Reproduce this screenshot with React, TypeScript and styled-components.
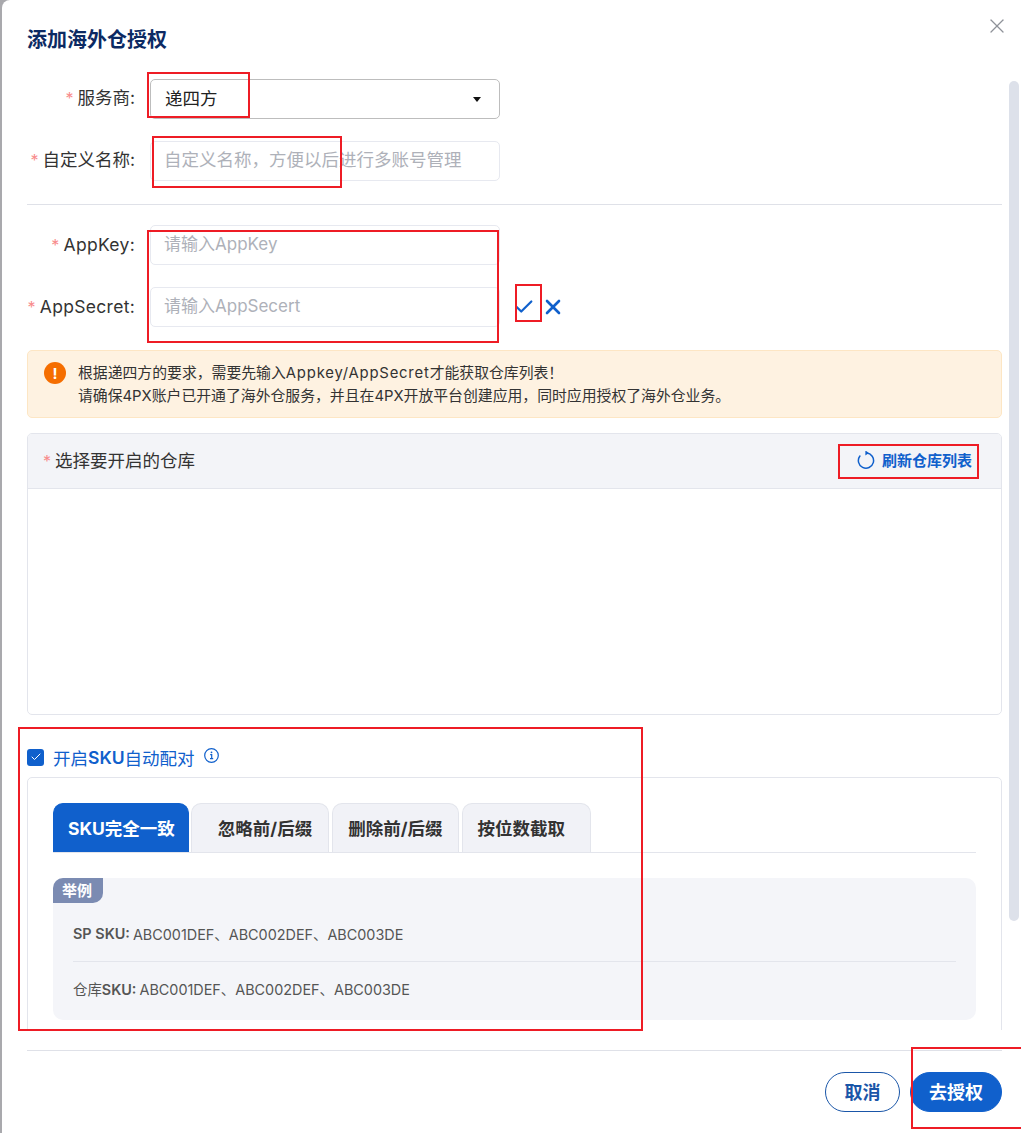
import { Check, X } from "lucide-react";
import styled, { createGlobalStyle } from "styled-components";

const GlobalStyle = createGlobalStyle`
  html, body {
    margin: 0;
    padding: 0;
    background: #a9a9ad;
  }

  body {
    font-family: Inter, "Noto Sans CJK SC", sans-serif;
    color: #333;
  }

  * {
    box-sizing: border-box;
  }
`;

const Page = styled.div`
  position: relative;
  width: 1021px;
  height: 1133px;
  padding-left: 2px;
  overflow: hidden;
`;

const Modal = styled.div`
  height: 1133px;
  padding: 25px 19px 0 25px;
  background: #fff;
  border-radius: 8px 0 0 0;
  display: flex;
  flex-direction: column;
`;

const Title = styled.h2`
  margin: 0 0 24px;
  font-size: 20px;
  line-height: 30px;
  font-weight: 700;
  color: #0c2a63;
`;

const CloseButton = styled.div`
  position: absolute;
  top: 14px;
  left: 985px;
  width: 24px;
  height: 24px;
  color: #8f9299;
  display: flex;
`;

const Scrollbar = styled.div`
  position: absolute;
  top: 81px;
  left: 1009px;
  width: 10px;
  height: 840px;
  border-radius: 5px;
  background: #dde1ea;
`;

const Body = styled.div`
  height: 951px;
  overflow: hidden;
  flex: none;
`;

const FormRow = styled.div<{ $mb: number }>`
  display: flex;
  align-items: center;
  height: 40px;
  margin-bottom: ${(p) => p.$mb}px;
`;

const Label = styled.label<{ $latin?: boolean }>`
  width: 108px;
  margin-right: 15px;
  margin-top: ${(p) => (p.$latin ? 0 : -2)}px;
  flex: none;
  text-align: right;
  font-size: 17.5px;
  line-height: 24px;
  letter-spacing: ${(p) => (p.$latin ? 0.3 : 0)}px;
  color: #333;
  white-space: nowrap;
`;

const Star = styled.span`
  color: #f88b8b;
  font-size: 16px;
  margin-right: 4px;
`;

const SelectBox = styled.div`
  width: 350px;
  height: 40px;
  padding: 0 18px 3px 14px;
  border: 1px solid #bdbdbd;
  border-radius: 5px;
  display: flex;
  align-items: center;
  justify-content: space-between;
  font-size: 17.5px;
  color: #222;
`;

const Caret = styled.span`
  width: 0;
  height: 0;
  margin-top: 3px;
  border-left: 4px solid transparent;
  border-right: 4px solid transparent;
  border-top: 5px solid #111;
`;

const TextInput = styled.input<{ $size: number }>`
  width: 350px;
  height: 40px;
  padding: 0 13px 3px;
  border: 1px solid #e7e9f0;
  border-radius: 5px;
  outline: none;
  background: #fff;
  font-family: inherit;
  font-size: ${(p) => p.$size}px;

  &::placeholder {
    color: #aeb1b9;
    opacity: 1;
  }
`;

const FormDivider = styled.div`
  height: 1px;
  margin: 23px 0 20px;
  background: #dfe1e8;
`;

const ConfirmIcons = styled.div`
  display: flex;
  align-items: center;
  gap: 6px;
  margin-left: 13px;
  color: #1060cc;
`;

const Alert = styled.div`
  height: 68px;
  padding: 11px 16px;
  display: flex;
  gap: 12px;
  border: 1px solid #fde6c4;
  border-radius: 5px;
  background: #fef2e1;
`;

const AlertIcon = styled.span`
  width: 22px;
  height: 22px;
  flex: none;
  border-radius: 50%;
  background: #f56e00;
  color: #fff;
  display: flex;
  align-items: center;
  justify-content: center;
  font-size: 15px;
  font-weight: 700;
`;

const AlertText = styled.p`
  margin: 0;
  font-size: 14.85px;
  line-height: 23px;
  color: #333;
  white-space: nowrap;
`;

const WideLatin = styled.span`
  letter-spacing: 0.8px;
`;

const WarehousePanel = styled.section`
  height: 282px;
  margin-top: 15px;
  border: 1px solid #e3e5ec;
  border-radius: 5px;
  overflow: hidden;
`;

const PanelHeader = styled.div`
  height: 55px;
  padding: 0 29px 3px 15px;
  display: flex;
  align-items: center;
  justify-content: space-between;
  background: #f3f4f8;
  border-bottom: 1px solid #e3e5ec;
  font-size: 17.5px;
  color: #333;
`;

const RefreshLink = styled.a`
  display: flex;
  align-items: center;
  gap: 7px;
  font-size: 15px;
  font-weight: 700;
  color: #1060cc;
`;

const CheckRow = styled.div`
  height: 24px;
  margin-top: 30px;
  display: flex;
  align-items: center;
  font-size: 17.5px;
  color: #1060cc;

  b {
    font-weight: 600;
  }
`;

const CheckBox = styled.span`
  width: 17px;
  height: 17px;
  margin-right: 9px;
  border-radius: 3px;
  background: #1060cc;
  color: #fff;
  display: flex;
  align-items: center;
  justify-content: center;
`;

const InfoIcon = styled.svg`
  margin: -4px 0 0 9px;
`;

const RulesBox = styled.div`
  margin-top: 8px;
  padding: 25px 25px 40px;
  border: 1px solid #e3e5ec;
  border-radius: 5px 5px 0 0;
`;

const TabBar = styled.div`
  display: flex;
  gap: 3px;
  height: 50px;
  border-bottom: 1px solid #e3e5ec;
`;

const Tab = styled.div<{ $active?: boolean; $pl: number; $pr: number }>`
  height: 49px;
  margin-right: ${(p) => (p.$active ? -1 : 0)}px;
  padding: 0 ${(p) => p.$pr}px 2px ${(p) => p.$pl}px;
  display: flex;
  align-items: center;
  border: 1px solid ${(p) => (p.$active ? "#1060cc" : "#e3e5ec")};
  border-bottom: none;
  border-radius: 10px 10px 0 0;
  background: ${(p) => (p.$active ? "#1060cc" : "#f1f2f7")};
  color: ${(p) => (p.$active ? "#fff" : "#333")};
  font-size: 17.5px;
  font-weight: 700;
  white-space: nowrap;
`;

const ExampleCard = styled.div`
  position: relative;
  height: 142px;
  margin-top: 25px;
  padding: 28px 20px 0;
  border-radius: 10px;
  background: #f4f5f9;
`;

const ExampleBadge = styled.span`
  position: absolute;
  top: 0;
  left: 0;
  width: 50px;
  height: 25px;
  padding-left: 9px;
  border-radius: 10px 0 10px 0;
  background: #7b8bb2;
  color: #fff;
  font-size: 15px;
  font-weight: 700;
  line-height: 25px;
`;

const ExampleRow = styled.div<{ $divided?: boolean }>`
  height: ${(p) => (p.$divided ? 56 : 52)}px;
  display: flex;
  align-items: center;
  gap: 3px;
  font-size: 14.4px;
  color: #555;
  border-bottom: ${(p) => (p.$divided ? "1px solid #e3e5ec" : "none")};

  strong {
    font-weight: 600;
  }
`;

const Footer = styled.footer`
  margin-top: 20px;
  padding-top: 21px;
  border-top: 1px solid #dfe1e8;
  display: flex;
  justify-content: flex-end;
  gap: 10px;
`;

const PillButton = styled.button<{ $primary?: boolean }>`
  height: 40px;
  width: ${(p) => (p.$primary ? 92 : 75)}px;
  padding: 0 0 3px;
  border: 1px solid ${(p) => (p.$primary ? "#1060cc" : "#1a56a8")};
  border-radius: 20px;
  background: ${(p) => (p.$primary ? "#1060cc" : "#fff")};
  color: ${(p) => (p.$primary ? "#fff" : "#1a56a8")};
  font-family: inherit;
  font-size: 18px;
  font-weight: 700;
`;

const Annotation = styled.div<{ $x: number; $y: number; $w: number; $h: number }>`
  position: absolute;
  left: ${(p) => p.$x}px;
  top: ${(p) => p.$y}px;
  width: ${(p) => p.$w}px;
  height: ${(p) => p.$h}px;
  border: 2px solid #ee1c25;
  pointer-events: none;
`;

const annotations = [
  { x: 147, y: 72, w: 103, h: 46 },
  { x: 152, y: 136, w: 190, h: 52 },
  { x: 147, y: 230, w: 352, h: 113 },
  { x: 515, y: 284, w: 27, h: 38 },
  { x: 838, y: 444, w: 141, h: 35 },
  { x: 18, y: 727, w: 625, h: 304 },
  { x: 911, y: 1047, w: 120, h: 82 },
];

const tabs = [
  { label: "SKU完全一致", pl: 14, pr: 13, active: true },
  { label: "忽略前/后缀", pl: 26, pr: 16 },
  { label: "删除前/后缀", pl: 15, pr: 16 },
  { label: "按位数截取", pl: 14, pr: 25 },
];

const App = () => {
  return (
    <Page>
      <GlobalStyle />
      <Modal>
        <Title>添加海外仓授权</Title>
        <Body>
          <FormRow $mb={22}>
            <Label>
              <Star>*</Star>服务商:
            </Label>
            <SelectBox>
              递四方
              <Caret />
            </SelectBox>
          </FormRow>
          <FormRow $mb={0}>
            <Label>
              <Star>*</Star>自定义名称:
            </Label>
            <TextInput $size={17.5} placeholder="自定义名称，方便以后进行多账号管理" />
          </FormRow>
          <FormDivider />
          <FormRow $mb={22}>
            <Label $latin>
              <Star>*</Star>AppKey:
            </Label>
            <TextInput $size={17} placeholder="请输入AppKey" />
          </FormRow>
          <FormRow $mb={23}>
            <Label $latin>
              <Star>*</Star>AppSecret:
            </Label>
            <TextInput $size={17} placeholder="请输入AppSecert" />
            <ConfirmIcons>
              <Check size={22} strokeWidth={2.4} />
              <X size={24} strokeWidth={2.6} />
            </ConfirmIcons>
          </FormRow>

          <Alert>
            <AlertIcon>!</AlertIcon>
            <AlertText>
              根据递四方的要求，需要先输入<WideLatin>Appkey/AppSecret</WideLatin>才能获取仓库列表！
              <br />
              请确保4PX账户已开通了海外仓服务，并且在4PX开放平台创建应用，同时应用授权了海外仓业务。
            </AlertText>
          </Alert>

          <WarehousePanel>
            <PanelHeader>
              <span>
                <Star>*</Star>选择要开启的仓库
              </span>
              <RefreshLink>
                <svg width="18" height="18" viewBox="0 0 18 18" fill="none">
                  <path
                    d="M9.6 2A7.6 7.6 0 1 1 2.9 5"
                    stroke="currentColor"
                    strokeWidth="1.5"
                    strokeLinecap="round"
                  />
                  <path d="M8.4 -0.6v5.2l3.4-2.6z" fill="currentColor" />
                </svg>
                刷新仓库列表
              </RefreshLink>
            </PanelHeader>
          </WarehousePanel>

          <CheckRow>
            <CheckBox>
              <Check size={12} strokeWidth={2} />
            </CheckBox>
            开启<b>SKU</b>自动配对
            <InfoIcon width="15" height="15" viewBox="0 0 15 15" fill="none">
              <circle cx="7.5" cy="7.5" r="6.8" stroke="currentColor" strokeWidth="1.2" />
              <path d="M6.2 6.6h1.5v4M6 10.6h3.2" stroke="currentColor" strokeWidth="1.2" />
              <circle cx="7.5" cy="4.3" r="0.9" fill="currentColor" />
            </InfoIcon>
          </CheckRow>

          <RulesBox>
            <TabBar>
              {tabs.map((tab) => (
                <Tab key={tab.label} $active={tab.active} $pl={tab.pl} $pr={tab.pr}>
                  {tab.label}
                </Tab>
              ))}
            </TabBar>
            <ExampleCard>
              <ExampleBadge>举例</ExampleBadge>
              <ExampleRow $divided>
                <strong>SP SKU:</strong> ABC001DEF、ABC002DEF、ABC003DE
              </ExampleRow>
              <ExampleRow>
                <span>
                  仓库<strong>SKU:</strong>
                </span>{" "}
                ABC001DEF、ABC002DEF、ABC003DE
              </ExampleRow>
            </ExampleCard>
          </RulesBox>
        </Body>
        <Footer>
          <PillButton>取消</PillButton>
          <PillButton $primary>去授权</PillButton>
        </Footer>
      </Modal>

      <CloseButton>
        <X size={24} strokeWidth={1.3} />
      </CloseButton>
      <Scrollbar />
      {annotations.map((a) => (
        <Annotation key={`${a.x}-${a.y}`} $x={a.x} $y={a.y} $w={a.w} $h={a.h} />
      ))}
    </Page>
  );
};

export default App;
